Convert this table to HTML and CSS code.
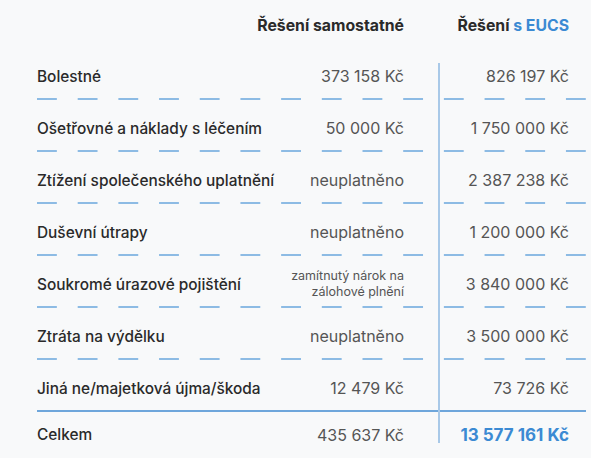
FILE: index.html
```html
<!DOCTYPE html>
<html lang="cs">
<head>
<meta charset="utf-8">
<link rel="stylesheet" href="styles.css">
</head>
<body>
<div class="table">
  <div class="row head">
    <div class="label"></div>
    <div class="val c2">Řešení samostatné</div>
    <div class="val c3 nob">Řešení&nbsp;<span class="blue">s EUCS</span></div>
  </div>
  <div class="row first dash">
    <div class="label">Bolestné</div>
    <div class="val c2">373 158 Kč</div>
    <div class="val c3">826 197 Kč</div>
  </div>
  <div class="row dash">
    <div class="label">Ošetřovné a náklady s léčením</div>
    <div class="val c2">50 000 Kč</div>
    <div class="val c3">1 750 000 Kč</div>
  </div>
  <div class="row dash">
    <div class="label">Ztížení společenského uplatnění</div>
    <div class="val c2">neuplatněno</div>
    <div class="val c3">2 387 238 Kč</div>
  </div>
  <div class="row dash">
    <div class="label">Duševní útrapy</div>
    <div class="val c2">neuplatněno</div>
    <div class="val c3">1 200 000 Kč</div>
  </div>
  <div class="row dash">
    <div class="label">Soukromé úrazové pojištění</div>
    <div class="val c2 small">zamítnutý nárok na<br>zálohové plnění</div>
    <div class="val c3">3 840 000 Kč</div>
  </div>
  <div class="row dash">
    <div class="label">Ztráta na výdělku</div>
    <div class="val c2">neuplatněno</div>
    <div class="val c3">3 500 000 Kč</div>
  </div>
  <div class="row solid">
    <div class="label">Jiná ne/majetková újma/škoda</div>
    <div class="val c2">12 479 Kč</div>
    <div class="val c3">73 726 Kč</div>
  </div>
  <div class="row total">
    <div class="label">Celkem</div>
    <div class="val c2">435 637 Kč</div>
    <div class="val c3 strong">13 577 161 Kč</div>
  </div>
</div>
</body>
</html>
```

FILE: styles.css
```css
html, body {
  margin: 0;
  padding: 0;
  background: #f8f9fa;
}
body {
  font-family: Inter, "Noto Sans", sans-serif;
  color: #2b2b2b;
}
.table {
  width: 549px;
  margin-left: 37px;
  padding-top: 15px;
}
.row {
  display: flex;
  height: 52px;
}
.label {
  width: 251px;
  flex: none;
  display: flex;
  align-items: center;
  padding-top: 4px;
  box-sizing: border-box;
  font-size: 15.4px;
  font-weight: 500;
  color: #2a2a2a;
  white-space: nowrap;
}
.val {
  display: flex;
  align-items: center;
  justify-content: flex-end;
  padding-top: 4px;
  box-sizing: border-box;
  font-size: 16px;
  color: #555555;
  white-space: nowrap;
}
.c2 {
  width: 150px;
  flex: none;
  padding-right: 34px;
}
.c3 {
  width: 148px;
  flex: none;
  padding-right: 17px;
  border-left: 2px solid #a9c9e8;
}
.c3.nob {
  border-left-color: transparent;
}
.head {
  height: 48px;
  align-items: flex-start;
}
.head .val, .head .label {
  padding-top: 1px;
  height: 20px;
  font-size: 15.8px;
  font-weight: 700;
  color: #2a2a2a;
}
.blue {
  color: #3b8ad3;
}
.first {
  height: 37px;
}
.first .label, .first .val {
  padding-top: 0;
  padding-bottom: 11px;
}
.dash {
  background-image: linear-gradient(to right, #8dbbe4 20px, transparent 20px);
  background-size: 40.7px 2px;
  background-repeat: repeat-x;
  background-position: 0 100%;
}
.solid {
  background-image: linear-gradient(#6ea6db, #6ea6db);
  background-size: 100% 2px;
  background-repeat: no-repeat;
  background-position: 0 100%;
}
.total {
  height: 31px;
}
.total .label, .total .val {
  padding-top: 14px;
}
.small {
  font-size: 12.5px;
  line-height: 16px;
  text-align: right;
  flex-direction: column;
  align-items: flex-end;
  justify-content: center;
}
.strong {
  font-size: 17px;
  font-weight: 700;
  color: #3b8ad3;
}
```
